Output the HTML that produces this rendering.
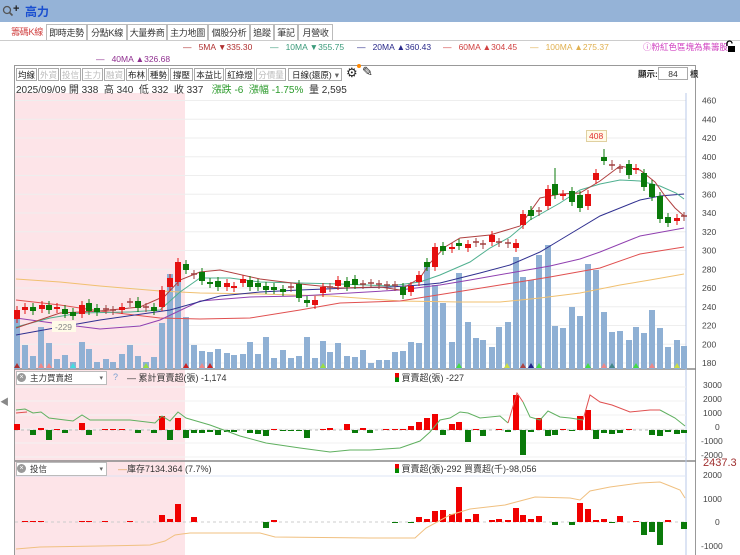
<!DOCTYPE html>
<html><head><meta charset="utf-8">
<style>
*{margin:0;padding:0;box-sizing:border-box}
body{width:740px;height:555px;overflow:hidden;background:#fff;font-family:"Liberation Sans","Noto Sans CJK TC",sans-serif;font-size:10px;color:#333;position:relative}
.abs{position:absolute;white-space:nowrap}
#top{left:0;top:0;width:740px;height:22px;background:#95b3d7}
.tab{position:absolute;top:24px;height:17px;border:1px solid #bbb;border-bottom:none;background:#fff;font-size:9px;line-height:16px;text-align:center;color:#333;white-space:nowrap;overflow:hidden;letter-spacing:-0.3px}
.tb{position:absolute;top:68px;height:13px;border:1px solid #aaa;background:#fff;font-size:8.5px;line-height:12px;text-align:center;color:#222;white-space:nowrap;overflow:hidden}
.tb.g{color:#bbb}
</style></head><body>
<div id="top" class="abs"></div>
<svg class="abs" style="left:2px;top:5px" width="12" height="12"><circle cx="5" cy="5" r="3.5" fill="none" stroke="#555" stroke-width="1.3"/><line x1="7.5" y1="7.5" x2="10.5" y2="10.5" stroke="#555" stroke-width="1.6"/></svg>
<div class="abs" style="left:13px;top:3px;font-size:11px;font-weight:bold;color:#222">+</div>
<div class="abs" style="left:25px;top:3px;font-size:12px;font-weight:bold;color:#1a4fd0">高力</div>

<div class="tab" style="left:8px;width:38px;color:#d04040;border:none">籌碼K線</div>
<div class="tab" style="left:46px;width:41px">即時走勢</div>
<div class="tab" style="left:87px;width:40px">分點K線</div>
<div class="tab" style="left:127px;width:40px">大量券商</div>
<div class="tab" style="left:167px;width:41px">主力地圖</div>
<div class="tab" style="left:208px;width:42px">個股分析</div>
<div class="tab" style="left:250px;width:24px">追蹤</div>
<div class="tab" style="left:274px;width:24px">筆記</div>
<div class="tab" style="left:298px;width:35px">月營收</div>
<div class="abs" style="left:0;top:40px;width:740px;height:1px;background:#ccc"></div>

<div class="abs" style="left:183px;top:42px;font-size:8.5px;color:#b03030">—&nbsp;&nbsp;&nbsp;5MA ▼335.30</div>
<div class="abs" style="left:270px;top:42px;font-size:8.5px;color:#3a9a7a">—&nbsp;&nbsp;&nbsp;10MA ▼355.75</div>
<div class="abs" style="left:357px;top:42px;font-size:8.5px;color:#2a2a8a">—&nbsp;&nbsp;&nbsp;20MA ▲360.43</div>
<div class="abs" style="left:443px;top:42px;font-size:8.5px;color:#d04040">—&nbsp;&nbsp;&nbsp;60MA ▲304.45</div>
<div class="abs" style="left:530px;top:42px;font-size:8.5px;color:#e0b050">—&nbsp;&nbsp;&nbsp;100MA ▲275.37</div>
<div class="abs" style="left:643px;top:41px;font-size:8.5px;color:#d040c0">ⓘ粉紅色區塊為集籌股</div>
<svg class="abs" style="left:724px;top:40px" width="12" height="13"><path d="M3 6V3.5a2.5 2.5 0 0 1 5 0" fill="none" stroke="#000" stroke-width="1.3"/><rect x="4" y="6" width="7" height="6" fill="#000"/></svg>
<div class="abs" style="left:96px;top:54px;font-size:8.5px;color:#903090">—&nbsp;&nbsp;&nbsp;40MA ▲326.68</div>

<div class="abs" style="left:14px;top:65px;width:682px;height:490px;border:1px solid #999;border-bottom:none"></div>
<div class="tb" style="left:16px;width:21px">均線</div>
<div class="tb g" style="left:38px;width:21px">外資</div>
<div class="tb g" style="left:60px;width:21px">投信</div>
<div class="tb g" style="left:82px;width:21px">主力</div>
<div class="tb g" style="left:104px;width:21px">融資</div>
<div class="tb" style="left:126px;width:21px">布林</div>
<div class="tb" style="left:148px;width:21px">種勢</div>
<div class="tb" style="left:170px;width:23px">撐壓</div>
<div class="tb" style="left:194px;width:30px">本益比</div>
<div class="tb" style="left:225px;width:30px">紅綠燈</div>
<div class="tb g" style="left:256px;width:30px">分價量</div>
<div class="tb" style="left:288px;width:54px;text-align:left;padding-left:3px">日線(還原)<span style="float:right;padding-right:2px;color:#666">▾</span></div>
<div class="abs" style="left:346px;top:65px;font-size:13px;color:#222">⚙</div>
<div class="abs" style="left:357px;top:64px;width:4px;height:4px;border-radius:2px;background:#f80"></div>
<div class="abs" style="left:362px;top:64px;font-size:13px;color:#222">✎</div>
<div class="abs" style="left:638px;top:68px;font-size:8.5px;font-weight:bold;color:#222">顯示:</div>
<div class="abs" style="left:658px;top:67px;width:30px;height:13px;border:1px solid #aaa;font-size:8.5px;text-align:center;line-height:12px">84</div>
<div class="abs" style="left:690px;top:68px;font-size:8.5px;font-weight:bold">根</div>

<svg class="abs" style="left:0;top:0" width="740" height="555" id="s"></svg>

<div class="abs" style="left:16px;top:81px;font-size:10px;color:#333">2025/09/09 開 338&nbsp; 高 340&nbsp; 低 332&nbsp; 收 337&nbsp;&nbsp; <span style="color:#2a9a2a">漲跌 -6&nbsp; 漲幅 -1.75%</span>&nbsp; 量 2,595</div>

<div class="abs" style="left:16px;top:371px;width:91px;height:14px;border:1px solid #bbb;background:#fff;font-size:8.5px;line-height:13px;padding-left:13px">主力買賣超<span style="float:right;padding-right:3px;color:#666;font-size:7px">▾</span></div>
<div class="abs" style="left:17px;top:373px;width:9px;height:9px;border-radius:5px;background:#999;color:#fff;font-size:7px;line-height:9px;text-align:center">×</div>
<div class="abs" style="left:113px;top:372px;font-size:9px;color:#7aa0d0">?</div>
<div class="abs" style="left:127px;top:371px;font-size:9px;color:#333">— 累計買賣超(張) -1,174</div>
<div class="abs" style="left:395px;top:371px;font-size:9px;color:#333"><span style="display:inline-block;width:4px;height:9px;background:linear-gradient(#e00 50%,#080 50%);vertical-align:-1px"></span> 買賣超(張) -227</div>

<div class="abs" style="left:16px;top:462px;width:91px;height:14px;border:1px solid #bbb;background:#fff;font-size:8.5px;line-height:13px;padding-left:13px">投信<span style="float:right;padding-right:3px;color:#666;font-size:7px">▾</span></div>
<div class="abs" style="left:17px;top:464px;width:9px;height:9px;border-radius:5px;background:#999;color:#fff;font-size:7px;line-height:9px;text-align:center">×</div>
<div class="abs" style="left:118px;top:462px;font-size:9px;color:#333"><span style="color:#e0a050">—</span>庫存7134.364 (7.7%)</div>
<div class="abs" style="left:395px;top:462px;font-size:9px;color:#333"><span style="display:inline-block;width:4px;height:9px;background:linear-gradient(#e00 50%,#080 50%);vertical-align:-1px"></span> 買賣超(張)-292 買賣超(千)-98,056</div>
<div class="abs" style="left:703px;top:457px;font-size:11px;color:#a03030">2437.3</div>
<div class="abs" style="left:0;top:395px;font-size:9px;color:#888">◀</div>

<script>
var s=document.getElementById('s'),h='';
function r(x,y,w,hh,c,o){h+='<rect x="'+x+'" y="'+y+'" width="'+w+'" height="'+hh+'" fill="'+c+'"'+(o?' opacity="'+o+'"':'')+'/>';}
function l(x1,y1,x2,y2,c,w,d){h+='<line x1="'+x1+'" y1="'+y1+'" x2="'+x2+'" y2="'+y2+'" stroke="'+c+'" stroke-width="'+(w||1)+'"'+(d?' stroke-dasharray="'+d+'"':'')+'/>';}
function p(pts,c,w){h+='<polyline fill="none" stroke="'+c+'" stroke-width="'+(w||1)+'" points="'+pts+'"/>';}
function t(x,y,s2,c,sz){h+='<text x="'+x+'" y="'+y+'" fill="'+c+'" font-size="'+(sz||9)+'" font-family="Liberation Sans">'+s2+'</text>';}
r(15,93,170,462,'#fde4e8');
for(var v=180;v<=460;v+=20){var y=138+(420-v)*0.9375;l(15,y,686,y,'#eee');t(702,y+3,v,'#444',8.5);}
l(15,369,696,369,'#888',1.5);l(15,461,696,461,'#888',1.5);
l(686,93,686,555,'#b8c8e8');
[[3000,388],[2000,402],[1000,416],[0,430],[-1000,444],[-2000,458]].forEach(function(a){t(a[0]<0?701:(a[0]?703:715),a[1],a[0],'#444',8.5);l(15,a[1]-1,686,a[1]-1,'#f2f2f2');});
[[2000,478],[1000,502],[0,525],[-1000,549]].forEach(function(a){t(a[0]<0?701:(a[0]?703:715),a[1],a[0],'#444',8.5);});
l(15,430,686,430,'#bbb',1,'3,3');l(15,522,686,522,'#ccc',1,'3,3');
var vol=[[17,318],[25,345],[33,356],[41,327],[49,343],[57,359],[65,355],[73,362],[82,342],[89,349],[97,362],[106,359],[113,362],[122,354],[130,345],[138,356],[146,362],[154,357],[162,323],[170,274],[178,278],[186,317],[194,345],[202,351],[210,352],[218,349],[227,353],[234,355],[243,354],[250,342],[258,354],[266,337],[274,358],[283,350],[291,358],[299,356],[307,337],[315,358],[323,341],[330,352],[338,343],[347,356],[355,357],[363,350],[371,363],[379,360],[387,360],[395,352],[403,351],[411,342],[419,343],[427,265],[435,285],[443,303],[452,342],[459,273],[468,322],[476,338],[483,340],[492,347],[499,327],[508,322],[516,257],[523,277],[531,280],[539,255],[548,245],[555,326],[563,328],[572,307],[580,316],[588,264],[596,270],[604,312],[612,332],[620,331],[629,340],[636,327],[644,333],[652,310],[660,328],[668,347],[677,340],[684,346]];
vol.forEach(function(a){r(a[0]-3,a[1],6,369-a[1],'#8fb0d4');});
[[17,'#a33'],[41,'#e88'],[49,'#e88'],[73,'#4dd'],[146,'#9d4'],[186,'#c22'],[202,'#e88'],[210,'#c22'],[323,'#9d4'],[459,'#4d4'],[507,'#cd4'],[523,'#a44'],[531,'#228'],[539,'#4d4'],[588,'#4d4'],[604,'#e88'],[612,'#488'],[636,'#4d4'],[652,'#e88'],[677,'#cd4']].forEach(function(a){h+='<polygon points="'+(a[0]-3)+',368 '+(a[0]+3)+',368 '+a[0]+',363" fill="'+a[1]+'"/>';});
p('16,279 60,282 100,286 160,291 200,293 260,294 330,296 400,301 460,302 500,302 540,298 580,293 620,285 650,280 684,274','#f0c070');
p('16,300 60,305 100,311 160,318 200,319 250,318 300,310 340,303 400,301 450,293 500,285 550,277 600,268 640,254 684,247','#e05050');
p('16,318 60,324 100,329 140,326 160,320 200,301 250,297 300,296 350,293 400,290 440,285 470,280 510,273 550,266 580,259 600,252 640,236 684,228','#9040b0');
p('16,335 60,327 100,320 170,310 220,296 260,292 300,290 350,288 390,287 420,285 440,283 480,273 510,265 540,252 560,240 600,216 640,200 660,196 684,194','#303090');
p('16,327 50,318 80,313 130,312 160,310 180,292 200,278 230,278 260,282 300,283 340,284 390,286 420,282 440,275 470,262 490,248 510,237 530,220 560,203 580,190 600,184 620,180 640,181 660,186 676,193 684,199','#50b090');
p('16,328 60,313 100,311 140,307 165,296 180,280 200,272 220,270 260,279 300,284 340,288 380,287 400,290 420,278 430,263 445,247 460,238 490,235 520,226 540,198 560,194 580,193 600,181 620,166 640,170 655,182 665,196 675,208 684,216','#b04040');
var c=[[17,310,319,'r'],[25,307,310,'r'],[33,307,311,'g'],[42,305,309,'r'],[49,305,310,'g'],[57,307,309,'r'],[65,309,314,'g'],[73,312,316,'g'],[82,305,314,'r'],[89,303,311,'g'],[97,308,312,'g'],[106,309,310,'d'],[113,310,311,'d'],[122,307,310,'r'],[130,302,303,'d'],[138,301,308,'g'],[146,307,308,'d'],[154,307,311,'g'],[162,290,307,'r'],[170,278,287,'r'],[178,262,282,'r'],[186,264,270,'g'],[194,274,275,'d'],[202,272,281,'g'],[210,282,284,'g'],[218,281,287,'g'],[227,283,287,'r'],[234,286,288,'r'],[243,279,283,'r'],[250,280,287,'g'],[258,283,287,'g'],[266,286,290,'g'],[274,287,290,'g'],[283,289,292,'g'],[291,287,288,'d'],[299,284,298,'g'],[307,300,303,'g'],[315,300,305,'r'],[323,287,293,'r'],[330,287,288,'d'],[338,280,286,'r'],[347,281,287,'g'],[355,279,285,'g'],[363,284,285,'d'],[371,283,284,'d'],[379,284,285,'d'],[387,285,286,'d'],[395,285,287,'d'],[403,287,295,'g'],[411,286,292,'r'],[419,275,282,'r'],[427,262,267,'g'],[435,247,267,'r'],[443,246,251,'g'],[452,247,249,'r'],[459,243,246,'g'],[468,244,248,'r'],[476,242,243,'d'],[483,244,245,'d'],[492,235,242,'r'],[499,242,243,'d'],[508,243,244,'d'],[516,243,248,'r'],[523,214,225,'r'],[531,210,216,'g'],[539,211,212,'d'],[548,189,206,'r'],[555,184,195,'g',168],[563,194,196,'r'],[572,191,202,'g'],[580,195,208,'g'],[588,194,206,'r'],[596,173,180,'r'],[604,157,161,'g',149],[612,165,166,'d',160],[620,168,169,'d'],[629,164,175,'g'],[636,168,170,'r'],[644,173,187,'g'],[652,184,197,'g'],[660,196,219,'g'],[668,217,223,'g'],[677,218,221,'r'],[684,216,217,'d']];
c.forEach(function(a){var col=a[3]=='r'?'#e51010':a[3]=='g'?'#0a7a0a':'#a04040';l(a[0],a[4]||a[1]-4,a[0],a[2]+4,col);if(a[3]=='d')l(a[0]-3,a[1],a[0]+3,a[1],col,1.5);else r(a[0]-3,a[1],6,a[2]-a[1],col);});
r(586,130,21,12,'#fffbe8');h+='<rect x="586.5" y="130.5" width="20" height="11" fill="none" stroke="#e0d0a0"/>';t(589,139,'408','#e03030',8.5);
r(52,321,24,11,'#fffbe8');t(55,330,'-229','#888',8.5);
var b1=[[17,6],[33,-5],[41,2],[49,-10],[57,1],[65,-3],[82,7],[89,-5],[105,1],[113,1],[122,1],[138,-3],[154,-3],[162,14],[170,-10],[178,12],[186,-8],[194,-3],[202,-3],[210,-2],[218,-5],[227,-2],[234,-2],[250,-3],[258,-4],[266,-6],[274,1],[283,-1],[291,-1],[299,-1],[307,-8],[323,1],[330,2],[347,6],[355,-3],[363,2],[370,-3],[386,1],[395,1],[403,1],[411,4],[419,8],[427,12],[435,16],[443,-5],[452,6],[459,8],[468,-12],[476,1],[483,-6],[499,1],[508,-2],[516,35],[523,-25],[531,-2],[539,12],[548,-6],[555,-5],[563,1],[572,-1],[580,14],[588,20],[596,-9],[604,-3],[612,-4],[620,-3],[629,1],[652,-5],[660,-6],[668,-2],[677,-4],[684,-3]];
b1.forEach(function(a){if(a[1]>0)r(a[0]-3,430-a[1],6,a[1],'#f00000');else r(a[0]-3,430,6,-a[1],'#0a7a0a');});
p('16,410 25,409 33,413 41,412 49,418 65,420 73,421 82,415 90,420 130,420 155,423 162,416 170,421 178,412 186,418 210,425 240,436 266,443 300,448 330,452 350,450 370,450 400,448 420,441 430,432 440,420 450,418 460,412 468,413 480,418 500,416 508,423','#60b060');
p('508,423 517,393 523,402','#e05050');
p('523,402 530,417 540,420 548,411 560,417 570,418 583,420','#60b060');
p('583,420 590,395 600,402 612,405 630,412 650,410 660,410','#e05050');
p('660,410 675,418 685,426','#60b060');
p('16,413 27,412','#e05050');
var b2=[[25,1],[33,1],[41,1],[82,1],[89,1],[105,1],[130,1],[162,7],[170,3],[178,18],[194,5],[266,-6],[274,2],[395,-1],[411,-1],[419,5],[427,3],[435,11],[443,12],[452,8],[459,35],[468,3],[476,8],[492,2],[499,3],[508,2],[516,14],[523,7],[531,3],[539,6],[555,-3],[572,-3],[580,19],[588,13],[596,2],[604,3],[612,-1],[620,6],[636,1],[644,-13],[652,-10],[660,-23],[668,2],[684,-7]];
b2.forEach(function(a){if(a[1]>0)r(a[0]-3,522-a[1],6,a[1],'#f00000');else r(a[0]-3,522,6,-a[1],'#0a7a0a');});
p('16,549 40,547 100,546 150,545 165,541 175,535 182,534 190,533 260,533 275,537 370,538 415,538 426,528 450,515 470,509 505,505 535,497 570,498 580,500 590,491 610,487 640,483 660,482 670,486 680,490 685,498','#f0c080');
l(15,476,686,476,'#dde4f4');
s.innerHTML=h;
</script>
</body></html>
